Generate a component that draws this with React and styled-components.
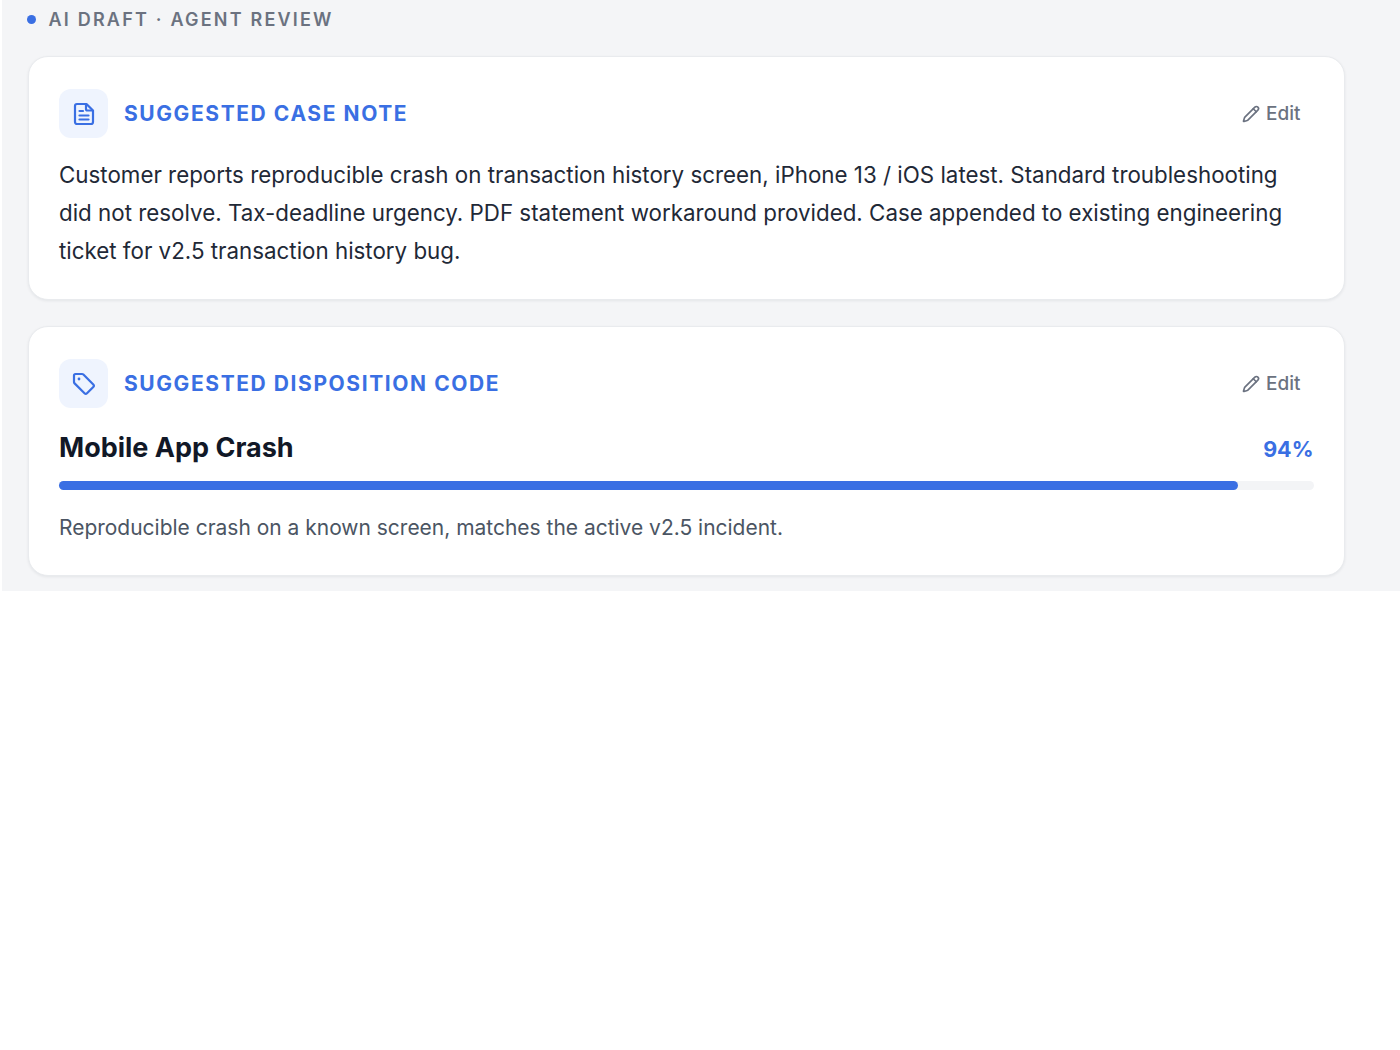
import React from "react";
import styled, { createGlobalStyle } from "styled-components";
import { Pencil } from "lucide-react";

const GlobalStyle = createGlobalStyle`
  html, body {
    margin: 0;
    background: #ffffff;
    font-family: Inter, "Liberation Sans", sans-serif;
  }
`;

const Page = styled.div`
  box-sizing: border-box;
  width: 1398.5px;
  height: 591px;
  margin-left: 1.5px;
  padding: 0 55px 0 26px;
  background: #f4f5f7;
  display: flex;
  flex-direction: column;
  gap: 26px;
`;

const Banner = styled.div`
  display: flex;
  align-items: center;
  gap: 12.5px;
  height: 37px;
  margin: 1px 0 -8px -0.5px;
  color: #6b7280;
  font-size: 18px;
  font-weight: 600;
  letter-spacing: 2.2px;
`;

const Dot = styled.span`
  width: 9px;
  height: 9px;
  border-radius: 50%;
  background: #3a6fe3;
`;

const Card = styled.section`
  box-sizing: border-box;
  height: ${props => props.$height}px;
  padding: 32px 30.5px 0;
  background: #ffffff;
  border: 1.5px solid #e9ebee;
  border-radius: 20px;
  box-shadow: 0 1px 3px rgba(17, 24, 39, 0.07);
`;

const CardHeader = styled.div`
  display: flex;
  align-items: center;
  gap: 16px;
  height: 49px;
`;

const IconBox = styled.div`
  width: 49px;
  height: 49px;
  border-radius: 12px;
  background: #eff4fe;
  color: #3a6fe3;
  display: flex;
  align-items: center;
  justify-content: center;
`;

const CardTitle = styled.h2`
  flex: 1;
  margin: 0;
  color: #3a6fe3;
  font-size: 21px;
  font-weight: 700;
  letter-spacing: 1.58px;
`;

const EditButton = styled.button`
  display: flex;
  align-items: center;
  gap: 6px;
  margin-right: 13px;
  padding: 0;
  border: none;
  background: none;
  color: #6b7280;
  font: inherit;
  font-size: 19px;
  font-weight: 500;
`;

const NoteText = styled.p`
  margin: 18px 0 0;
  color: #1f2937;
  font-size: 22.35px;
  line-height: 38px;
`;

const CodeRow = styled.div`
  display: flex;
  justify-content: space-between;
  align-items: flex-end;
  margin-top: 20px;
  height: 36px;
`;

const CodeName = styled.div`
  color: #111827;
  font-size: 27px;
  font-weight: 700;
`;

const Score = styled.div`
  margin-bottom: 2px;
  color: #3a6fe3;
  font-size: 21.5px;
  font-weight: 700;
`;

const Track = styled.div`
  height: 9px;
  margin-top: 17px;
  border-radius: 5px;
  background: #f3f4f6;
`;

const Fill = styled.div`
  height: 100%;
  border-radius: 5px;
  background: #3a6fe3;
`;

const Reason = styled.p`
  margin: 25px 0 0;
  color: #4b5563;
  font-size: 20.97px;
`;

const NoteIcon = () => (
  <svg width="22" height="24" viewBox="0 0 22 24" fill="none" stroke="currentColor" strokeWidth="2.2" strokeLinecap="round" strokeLinejoin="round">
    <path d="M4 2h9.5L20 8.5V20a2 2 0 0 1-2 2H4a2 2 0 0 1-2-2V4a2 2 0 0 1 2-2z" />
    <path d="M13 2.5V7a1.5 1.5 0 0 0 1.5 1.5H19" />
    <path d="M6.5 9H10" />
    <path d="M6.5 13.5h9" />
    <path d="M6.5 17.5h9" />
  </svg>
);

const TagIcon = () => (
  <svg width="24" height="24" viewBox="0 0 24 24" fill="none" stroke="currentColor" strokeWidth="2.2" strokeLinecap="round" strokeLinejoin="round">
    <path d="M3.5 2H10a2 2 0 0 1 1.4.6l9.9 9.9a1.8 1.8 0 0 1 0 2.5L15 21.3a1.8 1.8 0 0 1-2.5 0L2.6 11.4A2 2 0 0 1 2 10V3.5A1.5 1.5 0 0 1 3.5 2z" />
    <circle cx="7" cy="7" r="1.4" fill="currentColor" stroke="none" />
  </svg>
);

function App() {
  return (
    <>
      <GlobalStyle />
      <Page>
        <Banner>
          <Dot />
          AI DRAFT · AGENT REVIEW
        </Banner>
        <Card $height={244}>
          <CardHeader>
            <IconBox>
              <NoteIcon />
            </IconBox>
            <CardTitle>SUGGESTED CASE NOTE</CardTitle>
            <EditButton>
              <Pencil size={18} strokeWidth={2.2} />
              Edit
            </EditButton>
          </CardHeader>
          <NoteText>
            Customer reports reproducible crash on transaction history screen, iPhone 13 / iOS latest. Standard troubleshooting did not resolve. Tax-deadline urgency. PDF statement workaround provided. Case appended to existing engineering ticket for v2.5 transaction history bug.
          </NoteText>
        </Card>
        <Card $height={250}>
          <CardHeader>
            <IconBox>
              <TagIcon />
            </IconBox>
            <CardTitle>SUGGESTED DISPOSITION CODE</CardTitle>
            <EditButton>
              <Pencil size={18} strokeWidth={2.2} />
              Edit
            </EditButton>
          </CardHeader>
          <CodeRow>
            <CodeName>Mobile App Crash</CodeName>
            <Score>94%</Score>
          </CodeRow>
          <Track>
            <Fill style={{ width: "94%" }} />
          </Track>
          <Reason>Reproducible crash on a known screen, matches the active v2.5 incident.</Reason>
        </Card>
      </Page>
    </>
  );
}

export default App;
